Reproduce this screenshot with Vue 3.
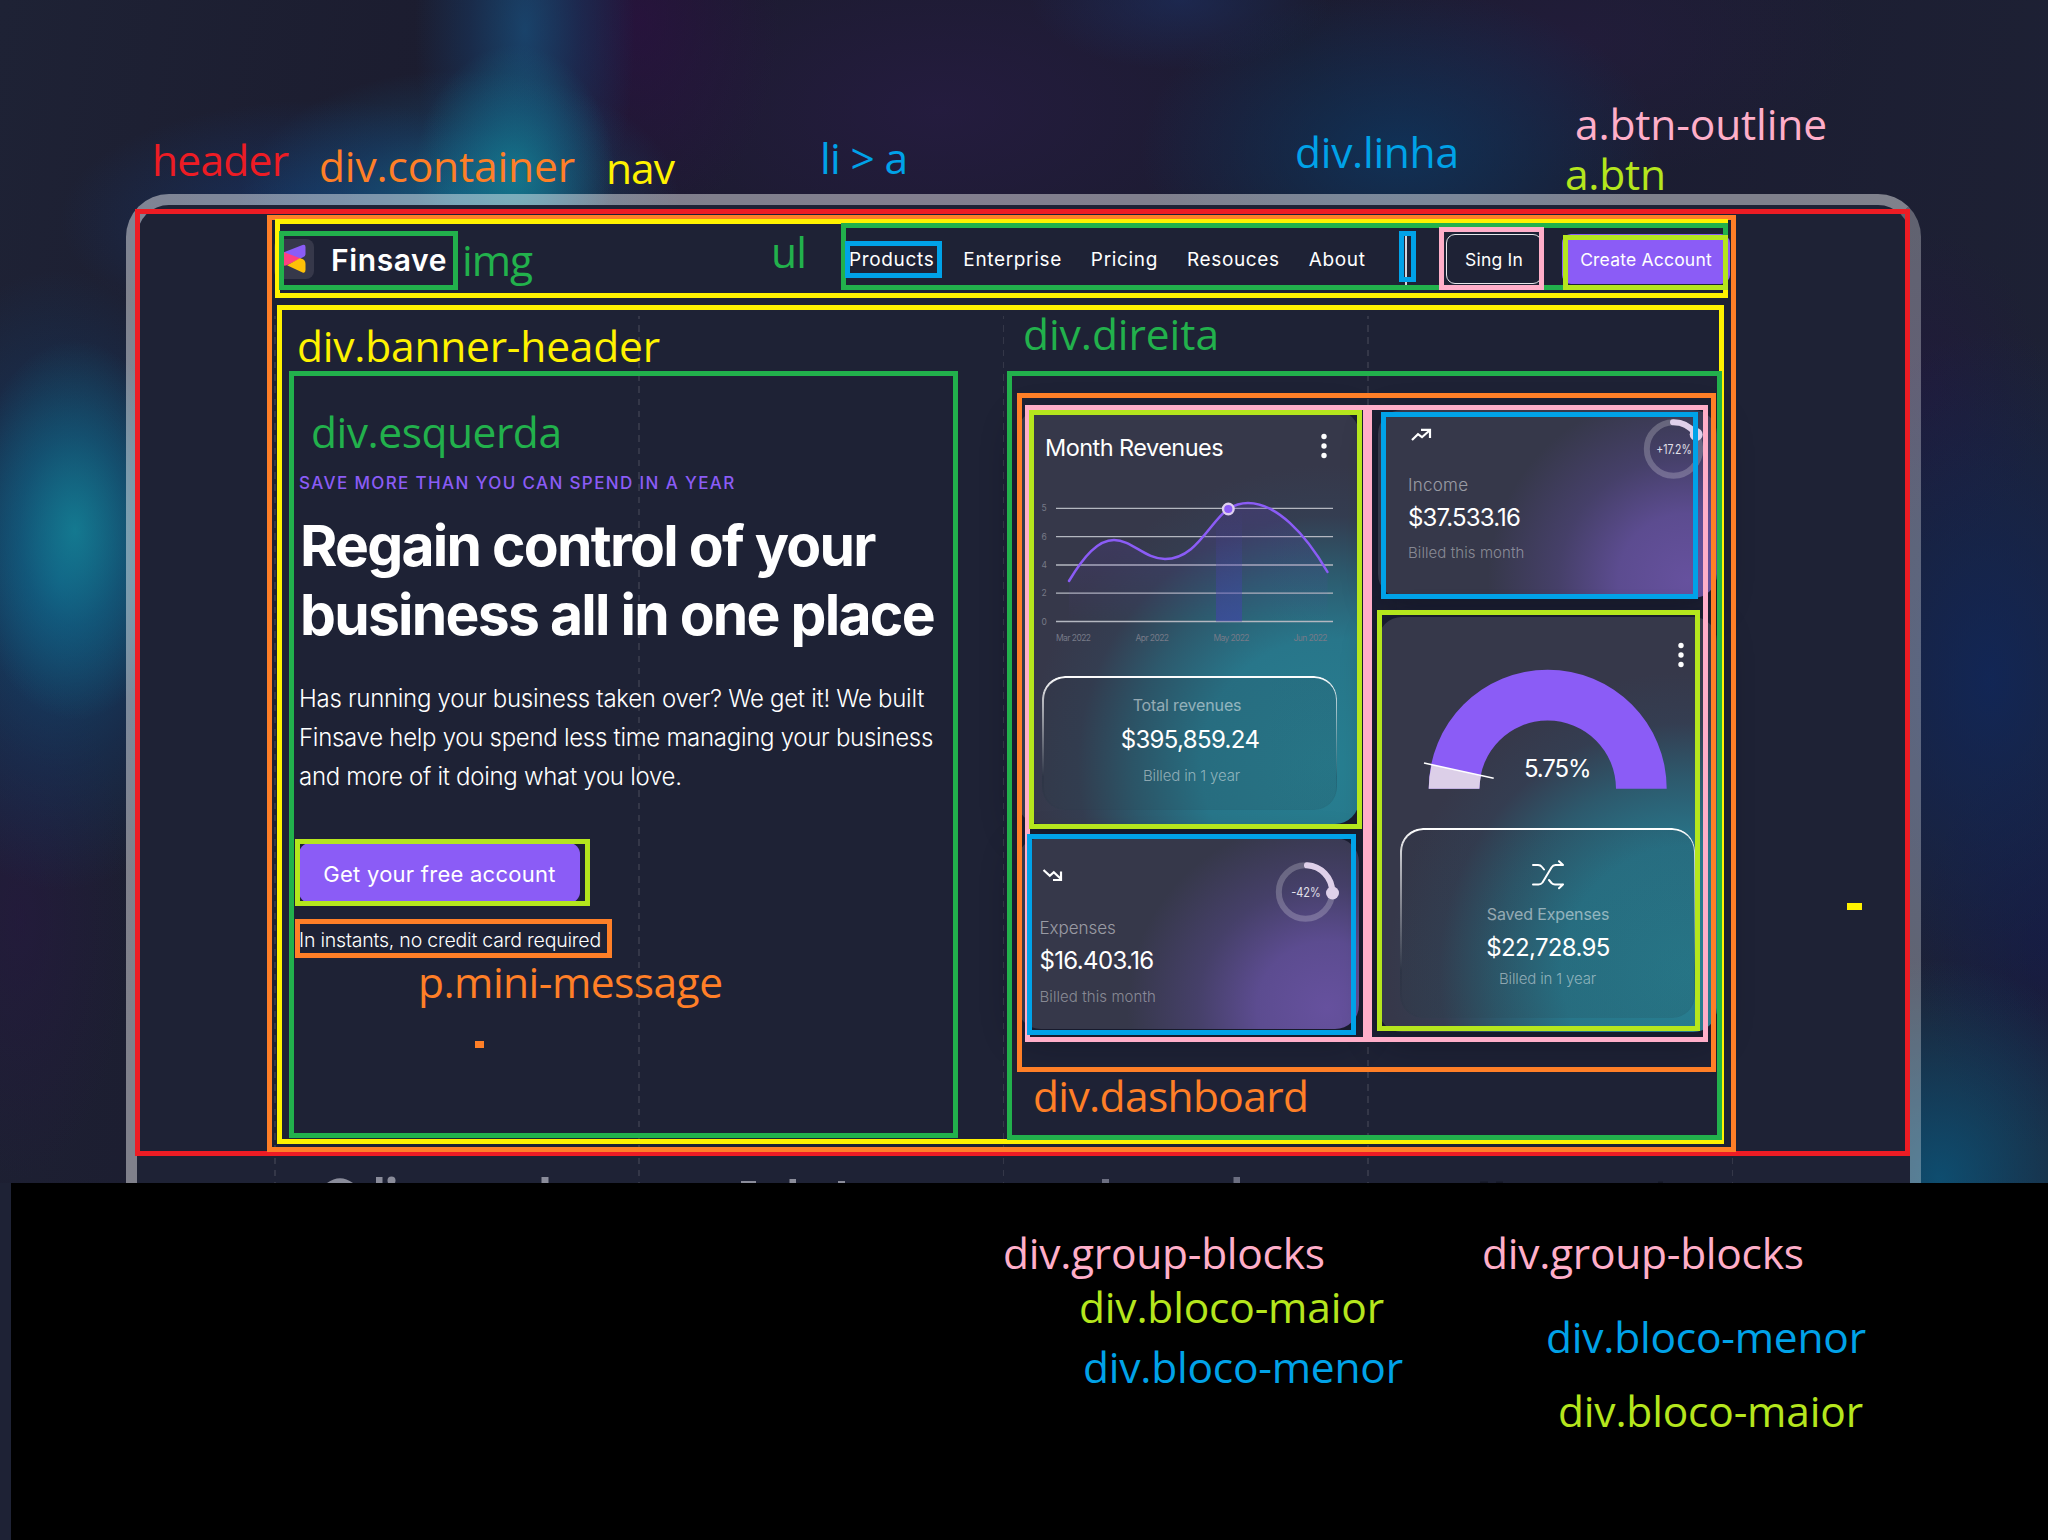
<script setup>
const colors = {
  red: '#ed1c24',
  orange: '#ff7f27',
  yellow: '#fff200',
  green: '#22b14c',
  blue: '#00a2e8',
  pink: '#ffaec9',
  lime: '#b5e61d',
}

const links = ['Products', 'Enterprise', 'Pricing', 'Resouces', 'About']

// colour, left, top, right, bottom (outer edges)
const frames = [
  ['red', 135, 209, 1910, 1156],
  ['orange', 267, 215, 1736, 1152],
  ['yellow', 275, 219, 1728, 298],
  ['yellow', 277, 305, 1724, 1144],
  ['green', 279, 231, 458, 290],
  ['green', 841, 223, 1728, 290],
  ['blue', 845, 241, 942, 278],
  ['blue', 1399, 231, 1416, 282],
  ['pink', 1439, 227, 1544, 290],
  ['lime', 1563, 235, 1728, 290],
  ['green', 289, 371, 958, 1138],
  ['lime', 295, 839, 590, 906],
  ['orange', 295, 919, 612, 958],
  ['green', 1007, 371, 1722, 1140],
  ['orange', 1017, 393, 1716, 1072],
  ['pink', 1025, 405, 1368, 1042],
  ['pink', 1367, 405, 1708, 1042],
  ['lime', 1029, 410, 1362, 829],
  ['blue', 1027, 834, 1356, 1035],
  ['blue', 1381, 412, 1698, 599],
  ['lime', 1377, 610, 1700, 1031],
]

// text, colour, left, right, baseline
const labels = [
  ['header', 'red', 154, 288, 175],
  ['div.container', 'orange', 321, 574, 181],
  ['nav', 'yellow', 608, 674, 183],
  ['li > a', 'blue', 822, 907, 173],
  ['div.linha', 'blue', 1297, 1458, 167],
  ['a.btn-outline', 'pink', 1577, 1826, 139],
  ['a.btn', 'lime', 1567, 1665, 189],
  ['img', 'green', 464, 532, 275],
  ['ul', 'green', 773, 806, 267],
  ['div.banner-header', 'yellow', 299, 659, 361],
  ['div.direita', 'green', 1025, 1218, 349],
  ['div.esquerda', 'green', 313, 561, 447],
  ['p.mini-message', 'orange', 420, 722, 997],
  ['div.dashboard', 'orange', 1035, 1308, 1111],
  ['div.group-blocks', 'pink', 1005, 1324, 1268],
  ['div.bloco-maior', 'lime', 1081, 1383, 1322],
  ['div.bloco-menor', 'blue', 1085, 1402, 1382],
  ['div.group-blocks', 'pink', 1484, 1803, 1268],
  ['div.bloco-menor', 'blue', 1548, 1865, 1352],
  ['div.bloco-maior', 'lime', 1560, 1862, 1426],
]
</script>

<template>
  <div class="stage">
    <div class="scene">
      <div class="window">
        <div class="guides"><i v-for="n in 5" :key="n"></i></div>

        <nav class="nav">
          <div class="brand">
            <svg class="mark" viewBox="0 0 40 40">
              <rect width="40" height="40" rx="8" fill="#36384a" />
              <path d="M8 14 28.500 6Q31.500 5 31.500 8V15Q31.500 17.500 29 18.200L25 20Z" fill="#8b5cf6" />
              <path d="M7 13.500 9.500 13 27 19.500 12 26.500 7 27Z" fill="#ff4081" />
              <path d="M13 26.200 26 19.200Q31.500 20 31.500 25V31Q31.500 34.500 28.500 33.500Z" fill="#ffc107" />
            </svg>
            <span class="brand-name">Finsave</span>
          </div>
          <ul class="links">
            <li v-for="l in links" :key="l"><a>{{ l }}</a></li>
          </ul>
          <div class="divider"></div>
          <a class="btn-outline">Sing In</a>
          <a class="btn">Create Account</a>
        </nav>

        <section class="hero">
          <div class="copy">
            <p class="eyebrow">SAVE MORE THAN YOU CAN SPEND IN A YEAR</p>
            <h1>Regain control of your<br />business all in one place</h1>
            <p class="lead">Has running your business taken over? We get it! We built<br />Finsave help you spend less time managing your business<br />and more of it doing what you love.</p>
            <a class="cta">Get your free account</a>
            <p class="mini">In instants, no credit card required</p>
          </div>

          <div class="board">
            <div class="col">
              <article class="card big revenue">
                <header class="card-head">
                  <h2>Month Revenues</h2>
                  <svg class="dots" width="6" height="26" viewBox="0 0 6 26"><circle cx="3" cy="3.500" r="2.700" /><circle cx="3" cy="13" r="2.700" /><circle cx="3" cy="22.500" r="2.700" /></svg>
                </header>
                <svg class="chart" width="300" height="160" viewBox="1038 490 300 160">
                  <defs>
                    <linearGradient id="area" x1="0" y1="0" x2="0" y2="1">
                      <stop offset="0" stop-color="#5b3fb0" stop-opacity=".28" />
                      <stop offset="1" stop-color="#5b3fb0" stop-opacity="0" />
                    </linearGradient>
                    <linearGradient id="bar" x1="0" y1="0" x2="0" y2="1">
                      <stop offset="0" stop-color="#4a3fae" stop-opacity="0" />
                      <stop offset="1" stop-color="#4540b0" stop-opacity=".55" />
                    </linearGradient>
                  </defs>
                  <g stroke="#b4b7c0" stroke-width="1.300">
                    <path v-for="y in [508.3, 536.7, 565, 593.2, 621.5]" :key="y" :d="`M1056 ${y}H1333`" />
                  </g>
                  <path d="M1069 581C1084 556 1098 540 1114 540C1132 540 1145 559 1165 559C1196 559 1209 523 1228 509C1236 504 1241 503 1248 503C1276 503 1305 533 1327.500 572V621H1069Z" fill="url(#area)" />
                  <rect x="1216" y="509" width="26" height="112.500" fill="url(#bar)" />
                  <path d="M1069 581C1084 556 1098 540 1114 540C1132 540 1145 559 1165 559C1196 559 1209 523 1228 509C1236 504 1241 503 1248 503C1276 503 1305 533 1327.500 572" fill="none" stroke="#8b5cf6" stroke-width="2.500" stroke-linecap="round" />
                  <circle cx="1228.300" cy="509" r="5.300" fill="#8b5cf6" stroke="#dfd0ee" stroke-width="2.400" />
                  <g class="ticks">
                    <text v-for="(t, i) in ['5', '6', '4', '2', '0']" :key="i" x="1041.500" :y="511.3 + i * 28.3">{{ t }}</text>
                    <text x="1056" y="641" textLength="35">Mar 2022</text>
                    <text x="1135.500" y="641" textLength="33.500">Apr 2022</text>
                    <text x="1213.500" y="641" textLength="36">May 2022</text>
                    <text x="1293.500" y="641" textLength="34">Jun 2022</text>
                  </g>
                </svg>
                <div class="panel total">
                  <span class="label">Total revenues</span>
                  <strong class="amount">$395,859.24</strong>
                  <span class="note">Billed in 1 year</span>
                </div>
              </article>

              <article class="card small expenses">
                <div class="info">
                  <svg class="trend" width="22" height="14" viewBox="0 0 22 14"><path d="M1.500 2 7.800 7.800 11.800 4.200 19.500 11.500M19 3.500V12H11" /></svg>
                  <span class="kind">Expenses</span>
                  <strong class="amount">$16.403.16</strong>
                  <span class="note">Billed this month</span>
                </div>
                <svg class="ring" width="70" height="64" viewBox="0 0 70 64">
                  <circle cx="32.500" cy="32" r="26.700" class="track" />
                  <path d="M34 5.300A26.700 26.700 0 0 1 59.200 32" class="value" />
                  <circle cx="59.500" cy="33" r="6.500" class="knob" />
                  <text x="18.200" y="37" textLength="29.500" lengthAdjust="spacingAndGlyphs">-42%</text>
                </svg>
              </article>
            </div>

            <div class="col">
              <article class="card small income">
                <div class="info">
                  <svg class="trend" width="22" height="14" viewBox="0 0 22 14"><path d="M2 12 8 6.200 12 9.200 19.500 2.500M11 1.800H20V10" /></svg>
                  <span class="kind">Income</span>
                  <strong class="amount">$37.533.16</strong>
                  <span class="note">Billed this month</span>
                </div>
                <svg class="ring" width="70" height="64" viewBox="0 0 70 64">
                  <circle cx="32.500" cy="32" r="26.700" class="track" />
                  <path d="M32 5.300A26.700 26.700 0 0 1 54 16.200" class="value" />
                  <circle cx="55.200" cy="17.500" r="6.500" class="knob" />
                  <text x="15.300" y="37" textLength="35.500" lengthAdjust="spacingAndGlyphs">+17.2%</text>
                </svg>
              </article>

              <article class="card big saved">
                <svg class="dots" width="6" height="26" viewBox="0 0 6 26"><circle cx="3" cy="3.500" r="2.700" /><circle cx="3" cy="13" r="2.700" /><circle cx="3" cy="22.500" r="2.700" /></svg>
                <svg class="gauge" width="250" height="125" viewBox="1422 666 250 125">
                  <path d="M1428.700 788.700A119 119 0 0 1 1666.700 788.700H1616A68.300 68.300 0 0 0 1479.400 788.700Z" fill="#8b5cf6" />
                  <path d="M1428.700 788.700A119 119 0 0 1 1431.500 764.700L1481 775.700A68.300 68.300 0 0 0 1479.400 788.700Z" fill="#dccfe8" />
                  <path d="M1424 763 1493.700 778.300" stroke="#fff" stroke-width="1.600" />
                  <text x="1524" y="777.300" textLength="67.500">5.75%</text>
                </svg>
                <div class="panel kept">
                  <svg class="shuffle" width="32" height="30" viewBox="0 0 32 30"><path d="M1 5H6Q8.500 5 10 7L12 9.500M17 20 19.500 23Q21 24.500 23 24.500H31M27 28.300 31 24.500M1 24.500H6.500Q9 24.500 10.500 22.500L19.500 7.500Q21 5 23.500 5H31M27 1.200 31 5" /></svg>
                  <span class="label">Saved Expenses</span>
                  <strong class="amount">$22,728.95</strong>
                  <span class="note">Billed in 1 year</span>
                </div>
              </article>
            </div>
          </div>
        </section>

        <svg class="partners" width="1773" height="27" viewBox="137 1156 1773 27">
          <g fill="#8a8c9a">
            <path d="M327 1183Q340 1173.500 353 1183Z" />
            <rect x="376" y="1177" width="6.500" height="10" />
            <circle cx="391.500" cy="1180.500" r="4" />
            <rect x="541.500" y="1177" width="7" height="10" />
            <rect x="741" y="1181" width="15" height="4" />
            <rect x="789.500" y="1179" width="6.500" height="8" />
            <rect x="838" y="1181" width="7" height="6" />
          </g>
          <g fill="#6b6e80"><rect x="1102" y="1179" width="7" height="8" /><rect x="1233.500" y="1177" width="6.500" height="10" /></g>
          <g fill="#151827"><rect x="1480" y="1181.500" width="8" height="3" /><rect x="1496" y="1181.500" width="7" height="3" /><rect x="1658" y="1181.500" width="5" height="3" /></g>
        </svg>
      </div>
    </div>
    <div class="void"></div>

    <svg class="notes" width="2048" height="1540" viewBox="0 0 2048 1540">
      <rect v-for="([c, l, t, r, b], i) in frames" :key="i" class="frame" :x="l + 2.5" :y="t + 2.5" :width="r - l - 5" :height="b - t - 5" :stroke="colors[c]" />
      <rect x="475" y="1041" width="9" height="7" :fill="colors.orange" />
      <rect x="1847" y="903" width="15" height="7" :fill="colors.yellow" />
      <text v-for="([s, c, l, r, b], i) in labels" :key="'t' + i" :x="l - 2" :y="b + 0.5" :textLength="r - l + 3" :fill="colors[c]">{{ s }}</text>
    </svg>
  </div>
</template>

<style>
body { margin: 0; background: #1e2235; }
</style>

<style scoped>
.stage {
  position: relative;
  width: 2048px;
  height: 1540px;
  overflow: hidden;
  display: flex;
  flex-direction: column;
  background: #1e2235;
  font-family: Inter, 'Liberation Sans', sans-serif;
  color: #fff;
}
.stage p, .stage h1, .stage h2, .stage ul { margin: 0; padding: 0; }
.scene {
  height: 1183px;
  box-sizing: border-box;
  padding: 194px 127px 0 126px;
  overflow: hidden;
  background:
    radial-gradient(ellipse 100px 130px at 515px 175px, rgba(20, 135, 152, .7), rgba(20, 120, 145, .4) 50%, transparent),
    radial-gradient(ellipse 220px 130px at 460px 200px, rgba(20, 115, 150, .65), rgba(20, 95, 142, .3) 55%, transparent),
    radial-gradient(ellipse 110px 260px at 525px 30px, rgba(24, 80, 125, .75), rgba(22, 66, 115, .4) 50%, transparent),
    radial-gradient(ellipse 260px 120px at 320px 220px, rgba(20, 62, 125, .6), transparent),
    radial-gradient(ellipse 140px 210px at 640px 20px, rgba(46, 14, 68, .6), transparent),
    radial-gradient(ellipse 150px 70px at 1180px 0, rgba(28, 48, 98, .6), transparent),
    radial-gradient(ellipse 260px 160px at 1400px 150px, rgba(12, 58, 102, .7), transparent),
    radial-gradient(ellipse 380px 200px at 940px 110px, rgba(42, 28, 72, .6), transparent),
    radial-gradient(ellipse 280px 140px at 1580px 40px, rgba(40, 28, 66, .5), transparent),
    radial-gradient(ellipse 110px 190px at 75px 530px, rgba(20, 140, 158, .75), rgba(16, 115, 145, .45) 50%, transparent),
    radial-gradient(ellipse 190px 310px at 60px 580px, rgba(14, 86, 136, .75), rgba(16, 66, 116, .35) 60%, transparent),
    radial-gradient(ellipse 110px 260px at 20px 920px, rgba(40, 22, 66, .5), transparent),
    radial-gradient(ellipse 200px 350px at 1990px 680px, rgba(14, 40, 96, .75), transparent),
    radial-gradient(ellipse 120px 160px at 1925px 390px, rgba(36, 22, 66, .45), transparent),
    radial-gradient(ellipse 190px 220px at 1940px 1180px, rgba(10, 88, 126, .8), transparent),
    radial-gradient(ellipse 130px 200px at 2048px 950px, rgba(20, 22, 68, .6), transparent),
    linear-gradient(100deg, #1e2235, #1b1b2e 25%, #1b1c31 70%, #1e2235);
}
.window {
  position: relative;
  height: 1100px;
  border: 11px solid rgba(255, 255, 255, .44);
  border-right-color: rgba(255, 255, 255, .3);
  border-radius: 43px;
  background: #1e2235;
  background-clip: padding-box;
}
.guides {
  position: absolute;
  left: 137px;
  top: 111px;
  width: 1459px;
  height: 880px;
  display: flex;
  justify-content: space-between;
}
.guides i {
  width: 1.500px;
  background: repeating-linear-gradient(#343748 0 6.500px, transparent 6.500px 12.240px);
  background-position: 0 -3px;
}
.nav, .hero { position: relative; }
.nav {
  height: 108px;
  display: flex;
  align-items: center;
  padding-left: 137px;
}
.brand { display: flex; align-items: center; width: 575px; gap: 17px; }
.mark { width: 40px; height: 40px; flex: none; }
.brand-name { padding-top: 2px; font-size: 30px; font-weight: 600; letter-spacing: .6px; }
.links { display: flex; gap: 29px; list-style: none; font-size: 19px; font-weight: 400; letter-spacing: .65px; }
.links li { flex: none; }
.divider { width: 2px; height: 54px; margin-left: auto; background: #d5d6dc; }
.btn-outline {
  box-sizing: border-box;
  width: 96px;
  height: 50px;
  margin-left: 39px;
  border: 1.500px solid #e6e6ea;
  border-radius: 9px;
  display: grid;
  place-items: center;
  font-size: 17.500px;
  font-weight: 400;
  letter-spacing: .2px;
}
.btn {
  width: 168px;
  height: 50px;
  margin: 0 180px 0 20px;
  border-radius: 9px;
  background: #8b5cf6;
  display: grid;
  place-items: center;
  font-size: 17.500px;
  font-weight: 400;
  letter-spacing: .2px;
  white-space: nowrap;
}
.hero { height: 843px; display: flex; }
.copy { width: 718px; padding: 157.500px 0 0 162px; flex: none; white-space: nowrap; }
.eyebrow { font-size: 17px; line-height: 24px; font-weight: 500; letter-spacing: 1.370px; color: #8b5cf6; }
.stage h1 { margin: 16px 0 0 1px; font-size: 57px; line-height: 69.500px; font-weight: 700; letter-spacing: -1.740px; }
.stage .lead { margin-top: 29px; font-size: 24px; line-height: 39.300px; font-weight: 300; letter-spacing: -.285px; }
.cta {
  box-sizing: border-box;
  margin-top: 47px;
  padding-top: 2px;
  width: 281px;
  height: 60px;
  border-radius: 11px;
  background: #8b5cf6;
  display: grid;
  place-items: center;
  font-size: 22px;
  font-weight: 400;
  letter-spacing: .25px;
}
.stage .mini { margin-top: 24.500px; font-size: 19.500px; line-height: 24px; font-weight: 300; letter-spacing: -.2px; }

.board { display: flex; gap: 19px; padding-top: 97px; }
.col { display: flex; flex-direction: column; }
.col:first-child { width: 342px; gap: 14px; }
.col:last-child { width: 339px; gap: 19px; }
.card { box-sizing: border-box; border-radius: 24px; background-color: #36384a; box-shadow: 0 10px 34px rgba(10, 12, 26, .45); }
.big { background-image: radial-gradient(circle 300px at 310px 355px, #277f91 0, #28768a 42%, rgba(42, 100, 120, .75) 65%, rgba(50, 70, 92, .4) 83%, transparent); }
.small { display: flex; justify-content: space-between; background-image: radial-gradient(ellipse 200px 190px at 310px 170px, #66519e 0, #5c4c90 35%, rgba(82, 70, 130, .55) 65%, transparent); }
.revenue { height: 414px; padding-left: 25px; }
.expenses { height: 191px; }
.income { height: 188px; }
.saved { height: 415px; padding-top: .1px; }
.card-head { display: flex; justify-content: space-between; padding: 23px 32px 0 3px; height: 57px; }
.stage h2 { font-size: 23.500px; line-height: 30px; font-weight: 400; letter-spacing: -.55px; }
.dots { fill: #fff; display: block; }
.chart { display: block; margin-left: -4px; overflow: visible; }
.ticks text { font-size: 8.500px; fill: #777a88; }
.panel {
  position: relative;
  box-sizing: border-box;
  border-radius: 23px;
  display: flex;
  flex-direction: column;
  align-items: center;
  background: linear-gradient(rgba(35, 45, 60, .12), rgba(35, 60, 70, .16));
}
.panel::before {
  content: '';
  position: absolute;
  inset: 0;
  padding: 1.500px;
  border-radius: 23px;
  background: linear-gradient(#fff 0, rgba(255, 255, 255, .65) 18%, rgba(20, 30, 45, .15) 75%, transparent);
  -webkit-mask: linear-gradient(#000 0 0) content-box exclude, linear-gradient(#000 0 0);
  mask: linear-gradient(#000 0 0) content-box exclude, linear-gradient(#000 0 0);
}
.total { width: 295px; height: 134px; margin-top: 26px; padding: 19px 5px 0 0; }
.kept { width: 295px; height: 190px; margin: 37px 0 0 22px; padding-top: 32px; }
.label { font-size: 16px; line-height: 20px; letter-spacing: -.15px; color: rgba(255, 255, 255, .5); }
.amount { font-size: 24px; line-height: 30px; font-weight: 400; letter-spacing: -.65px; }
.note { font-size: 15px; line-height: 20px; font-weight: 300; letter-spacing: -.15px; color: rgba(255, 255, 255, .48); }
.total .amount { margin-top: 10px; padding-left: 6px; }
.total .note { margin-top: 10.500px; padding-left: 9px; }
.kept .label { margin-top: 14px; padding-left: 1px; }
.kept .amount { margin-top: 9px; padding-left: 1px; }
.kept .note { margin-top: 6px; }
.info { display: flex; flex-direction: column; align-items: flex-start; padding: 18px 0 0 30px; }
.expenses .info { padding: 30px 0 0 22.500px; }
.trend { margin-left: 2px; fill: none; stroke: #fff; stroke-width: 2.200; }
.kind { margin-top: 30.500px; font-size: 17px; line-height: 24px; font-weight: 300; letter-spacing: .25px; color: rgba(255, 255, 255, .5); }
.expenses .kind { margin-top: 34px; letter-spacing: -.05px; }
.info .amount { margin-top: 6.300px; }
.income .amount { letter-spacing: -.85px; }
.info .note { margin-top: 10.500px; letter-spacing: .08px; color: rgba(255, 255, 255, .42); }
.ring { overflow: visible; }
.income .ring { margin: 7px 6px 0 0; }
.expenses .ring { margin: 22px 16px 0 0; }
.ring .track { fill: none; stroke: rgba(255, 255, 255, .22); stroke-width: 6; }
.ring .value { fill: none; stroke: #dfd0ea; stroke-width: 6; stroke-linecap: round; }
.ring .knob { fill: #dfd0ea; }
.ring text { font-size: 12.500px; fill: #e2e0ea; }
.saved .dots { margin: 25px 0 0 300px; }
.gauge { display: block; margin: -2px 0 0 44px; }
.gauge text { font-size: 24px; fill: #fff; }
.shuffle { fill: none; stroke: #fff; stroke-width: 2; stroke-linecap: round; stroke-linejoin: round; }
.partners { position: relative; display: block; }
.void { flex: 1; margin-left: 11px; background: #000; }
.notes { position: absolute; left: 0; top: 0; pointer-events: none; }
.notes text { font: 42.500px 'Open Sans', 'Noto Sans', sans-serif; }
.frame { fill: none; stroke-width: 5; shape-rendering: crispEdges; }
</style>
